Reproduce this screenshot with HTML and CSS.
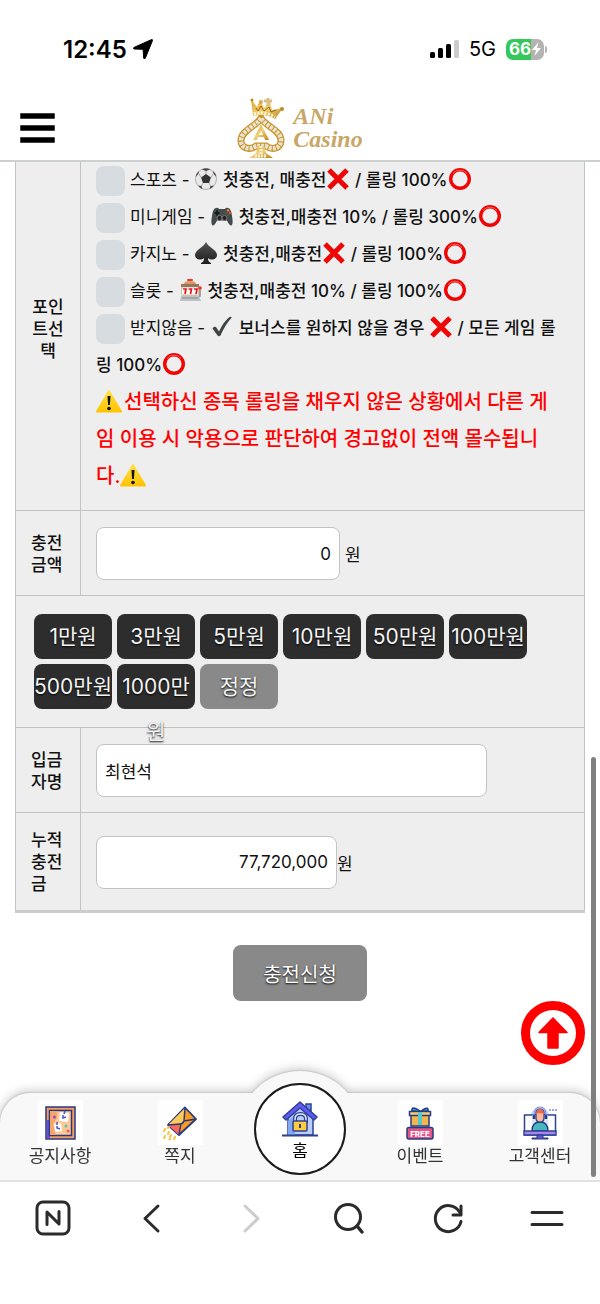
FILE: index.html
```html
<!DOCTYPE html>
<html lang="ko">

<head>
    <meta charset="utf-8" />
    <title>ANi Casino</title>
    <meta name="viewport" content="width=device-width, initial-scale=1">
    <link rel="stylesheet" href="styles.css">
</head>

<body>
    <svg class="defs" aria-hidden="true">
        <defs>
            <linearGradient id="gold" x1="0" y1="0" x2="1" y2="1">
                <stop offset="0" stop-color="#d9a62b" />
                <stop offset="0.5" stop-color="#f1d27a" />
                <stop offset="1" stop-color="#b57f16" />
            </linearGradient>
            <linearGradient id="dark" x1="0" y1="0" x2="0" y2="1">
                <stop offset="0" stop-color="#555" />
                <stop offset="1" stop-color="#1b1b1b" />
            </linearGradient>
            <linearGradient id="sign" x1="0" y1="0" x2="0" y2="1">
                <stop offset="0" stop-color="#ffe14d" />
                <stop offset="1" stop-color="#ffc400" />
            </linearGradient>
        </defs>
        <symbol id="cross" viewBox="0 0 22 22">
            <path d="M2 2l18 18M20 2L2 20" stroke="#f00505" stroke-width="5" />
        </symbol>
        <symbol id="circle" viewBox="0 0 22 22">
            <circle cx="11" cy="11" r="9.300" fill="none" stroke="#f00505" stroke-width="3.400" />
            <path d="M4 5.500a9 9 0 0 1 14 0" fill="none" stroke="#ff5a50" stroke-width="1" />
        </symbol>
        <symbol id="warning" viewBox="0 0 26 24">
            <path d="M13 2L25 22.500H1z" fill="url(#sign)" stroke="url(#sign)" stroke-width="2" stroke-linejoin="round" />
            <path d="M11.500 7h3l-.6 9h-1.800z" fill="#111" />
            <circle cx="13" cy="19.500" r="1.800" fill="#111" />
        </symbol>
    </svg>

    <div class="status">
        <div class="status-time">
            12:45
            <svg width="20" height="20" viewBox="0 0 20 20"><path d="M18.500 .6L.9 8.500q-1 .8.2 1.500l9 .3.600 9q.6 1.200 1.500.1L19.500 1.500q.2-1.200-1-.9z" stroke="#000" stroke-linejoin="round" /></svg>
        </div>
        <div class="status-icons">
            <svg width="29" height="19" viewBox="0 0 29 19">
                <rect x="0" y="12" width="5" height="6" rx="1.500" />
                <rect x="8" y="8" width="5" height="10" rx="1.500" />
                <rect x="16" y="4" width="5" height="14" rx="1.500" />
                <rect x="24" y="0" width="5" height="18" rx="1.500" fill="#ccc" />
            </svg>
            <span class="network">5G</span>
            <div class="battery">
                <span>66</span>
                <svg width="9" height="14" viewBox="0 0 9 14"><path d="M6.500 0L0 8h4L2.500 14 9 6H5z" fill="#fff" /></svg>
            </div>
        </div>
    </div>

    <header class="header">
        <button class="menu-btn" aria-label="메뉴">
            <svg width="35" height="32" viewBox="0 0 35 32"><path d="M3 4h29M3 16h29M3 28h29" stroke="#000" stroke-width="5.500" stroke-linecap="square" /></svg>
        </button>
        <a href="/" class="logo">
            <svg width="48" height="62" viewBox="0 0 48 62">
                <path d="M24 21C20 29 4 33 4 43.500c0 8 9 10 15 5.500h10c6 4.500 15 2.500 15-5.500C44 33 28 29 24 21z" fill="#fff" stroke="#c8962a" stroke-width="7" />
                <path d="M24 21C20 29 4 33 4 43.500c0 8 9 10 15 5.500h10c6 4.500 15 2.500 15-5.500C44 33 28 29 24 21z" fill="none" stroke="#e9e2d2" stroke-width="4.500" stroke-dasharray="3 1" />
                <path d="M21 49h6l2 7 7 5H12l7-5z" fill="url(#gold)" />
                <path d="M24 49v8M18 59h12" stroke="#f6f0df" stroke-width="3" stroke-dasharray="2 1" />
                <path d="M24 27l8 16h-4l-1-3h-6l-1 3h-4zM24 34l-2 4h4z" fill="url(#gold)" fill-rule="evenodd" />
                <path d="M16 19L14 2l6 8 3-7 4 8 6-7 2 9 11-2-8 11q-10-6-22-3z" fill="url(#gold)" />
                <path d="M17 17q11-3 21 3" fill="none" stroke="#fff6dc" stroke-width="3" stroke-dasharray="2 1.500" />
                <path d="M31 1v8M27 4h8" stroke="#d8c08a" stroke-width="3" />
                <path d="M19 11l2 3 3-5 3 5 5-4 2 5 5-2" fill="none" stroke="#98670e" />
                <circle cx="24" cy="5" r="2" fill="#d5ad4c" />
                <circle cx="15" cy="3" r="1.500" fill="#bd8823" />
                <circle cx="45" cy="12" r="2" fill="#bd8823" />
            </svg>
            <span class="logo-text">ANi<br>Casino</span>
        </a>
    </header>

    <main>
        <form class="form" onsubmit="return false">
            <table class="form-table">
                <tr>
                    <th class="point-label">포인트선택</th>
                    <td class="point-cell">
                        <div class="point">
                            <input type="radio" name="point" id="p1"><label for="p1">스포츠 -
                            <svg class="emoji" viewBox="0 0 22 22"><circle cx="11" cy="11" r="10.500" fill="#e9e9e9" stroke="#999" stroke-width=".7" /><path d="M11 6l5 3.500-2 5.500H8L6 9.500z" fill="#333" /><path d="M7 1.500l4 1.500 4-1.500-2-1H9zM.700 9l3-3.500L4 3 1.500 6zM21.300 9l-3-3.500L18 3l2.500 3zM3 17.500l3.500.5 1 3-2-1zM19 17.500l-3.500.5-1 3 2-1z" fill="#444" /><path d="M11 3v3M3.700 5.500L6 9.500M18.300 5.500L16 9.500M8 15l-1.500 3M14 15l1.500 3" stroke="#aaa" /></svg>
                            <b>첫충전, 매충전<svg class="emoji"><use href="#cross" /></svg> / 롤링 100%<svg class="emoji"><use href="#circle" /></svg></b></label>
                        </div>
                        <div class="point">
                            <input type="radio" name="point" id="p2"><label for="p2">미니게임 -
                            <svg class="emoji" viewBox="0 0 22 22"><path d="M5 3q2-1 3 1h6q1-2 3-1 3 0 4 8 1.500 8-.5 9.500-2 .5-4.500-5H6q-2.500 5.500-4.500 5Q-.500 19 1 11 2 3 5 3z" fill="#444b4b" /><path d="M3.500 8h5M6 5.500v5" stroke="#191919" stroke-width="2" /><circle cx="8.500" cy="13" r="2.500" fill="#222" stroke="#777" /><circle cx="13.500" cy="13" r="2.500" fill="#222" stroke="#777" /><circle cx="17" cy="5.500" r="1.300" fill="#f58220" /><circle cx="19" cy="8" r="1.300" fill="#e2502c" /><circle cx="15" cy="8" r="1.300" fill="#555" /><circle cx="17" cy="10" r="1.300" fill="#555" /></svg>
                            <b>첫충전,매충전 10% / 롤링 300%<svg class="emoji"><use href="#circle" /></svg></b></label>
                        </div>
                        <div class="point">
                            <input type="radio" name="point" id="p3"><label for="p3">카지노 -
                            <svg class="emoji" viewBox="0 0 22 22"><path d="M11 0c2 5 11 8 11 13 0 4.500-6 6-9 3 0 3 1 4 3 5v1H6v-1c2-1 3-2 3-5-3 3-9 1.500-9-3C0 8 9 5 11 0z" fill="url(#dark)" /></svg>
                            <b>첫충전,매충전<svg class="emoji"><use href="#cross" /></svg> / 롤링 100%<svg class="emoji"><use href="#circle" /></svg></b></label>
                        </div>
                        <div class="point">
                            <input type="radio" name="point" id="p4"><label for="p4">슬롯 -
                            <svg class="emoji" viewBox="0 0 22 22"><path d="M4 5q0-3 6-3t6 3z" fill="#d99a63" /><rect x="7" y="0" width="6" height="2" rx="1" fill="#e33" /><rect x="1" y="5" width="18" height="12" rx="2" fill="#cfc2a6" /><path d="M1 5h18v3H1z" fill="#94785c" /><rect x="2" y="8.500" width="16" height="7" fill="#fff" /><path d="M3 10h3l-1 5M8.500 10h3l-1 5M14 10h3l-1 5" fill="none" stroke="#e8141c" stroke-width="1.700" /><path d="M1 17h18l2 5H0z" fill="#bfc2c4" /><path d="M2 19h16" stroke="#888" /><path d="M20 10v7h-1" fill="none" stroke="#888" stroke-width="1.500" /><circle cx="20" cy="9" r="1.800" fill="#e33" /></svg>
                            <b>첫충전,매충전 10% / 롤링 100%<svg class="emoji"><use href="#circle" /></svg></b></label>
                        </div>
                        <div class="point">
                            <input type="radio" name="point" id="p5"><label for="p5">받지않음 -
                            <svg class="emoji" viewBox="0 0 22 22"><path d="M1.500 12.500q1-2.500 3.500-1.500l3 4.500Q13 5 18.500 1q2.500-.5 2 .7Q14 9 9.500 19.500q-2 1.500-3 0z" fill="#404444" /></svg>
                            <b>보너스를 원하지 않을 경우 <svg class="emoji"><use href="#cross" /></svg> / 모든 게임 롤링 100%<svg class="emoji"><use href="#circle" /></svg></b></label>
                        </div>
                        <div class="warning"><svg class="emoji-big"><use href="#warning" /></svg>선택하신 종목 롤링을 채우지 않은 상황에서 다른 게임 이용 시 악용으로 판단하여 경고없이 전액 몰수됩니다.<svg class="emoji-big"><use href="#warning" /></svg></div>
                    </td>
                </tr>
                <tr>
                    <th><label for="money">충전금액</label></th>
                    <td><div class="field"><input class="input money" id="money" value="0"><span>원</span></div></td>
                </tr>
                <tr>
                    <td colspan="2" class="amount-cell">
                        <div class="amounts">
                            <button type="button" class="amount">1만원</button>
                            <button type="button" class="amount">3만원</button>
                            <button type="button" class="amount">5만원</button>
                            <button type="button" class="amount">10만원</button>
                            <button type="button" class="amount">50만원</button>
                            <button type="button" class="amount">100만원</button>
                            <button type="button" class="amount">500만원</button>
                            <button type="button" class="amount">1000만원</button>
                            <button type="button" class="amount reset">정정</button>
                        </div>
                    </td>
                </tr>
                <tr>
                    <th><label for="name">입금자명</label></th>
                    <td><div class="field"><input class="input name" id="name" value="최현석"></div></td>
                </tr>
                <tr>
                    <th><label for="total">누적충전금</label></th>
                    <td><div class="field tight"><input class="input money total" id="total" value="77,720,000" readonly><span>원</span></div></td>
                </tr>
            </table>
            <button class="submit">충전신청</button>
        </form>
        <a href="#" class="to-top" aria-label="맨 위로">
            <svg width="30" height="32" viewBox="0 0 30 32"><path d="M15 1L29 15.500H20V31H10V15.500H1z" fill="red" stroke="red" stroke-width="1.500" stroke-linejoin="round" /></svg>
        </a>
    </main>

    <nav class="tabs">
        <a href="/notice" class="tab">
            <span class="tab-icon">
                <svg width="31" height="34" viewBox="0 0 31 34"><rect x="1" y="1" width="29" height="32" fill="#f79a63" stroke="#243a83" stroke-width="1.500" /><path d="M2 14h3v18H2z" fill="#654ff0" /><rect x="4.500" y="4.500" width="22" height="25" fill="#ffc894" stroke="#243a83" stroke-width="1.500" /><path d="M5 5h7v7l-4 6 3 11H5z" fill="#f8a568" /><path d="M15 6l9 1-1 9-9-1zM9 18l7-1 1 8-7 1z" fill="#fff" /><path d="M18 9v3l3-1M12 20v2l3 1M20 5l-1 3M12 16v3" stroke="#4657cf" stroke-width="1.500" fill="none" /><circle cx="9.500" cy="11" r="1.500" fill="#8a4ce8" /><circle cx="21" cy="20" r="1.500" fill="#4fc9c4" /><circle cx="23" cy="25" r="1.500" fill="#f35b4c" /></svg>
            </span>
            공지사항
        </a>
        <a href="/message" class="tab">
            <span class="tab-icon">
                <svg width="34" height="34" viewBox="0 0 34 34"><path d="M22 1.500L33 13 16 29 5 19z" fill="#fb9a1d" stroke="#243a83" stroke-width="1.800" stroke-linejoin="round" /><path d="M5 19l11-2v12z" fill="#ff6659" /><path d="M22 2v14l-4 3-12-1z" fill="#ffcc58" /><path d="M22 2l-1 13q-1 3-4 3L5 19M18 17l-2 12M21 15l12-2" fill="none" stroke="#243a83" stroke-width="1.500" /><path d="M2 23l-1 2M6 26l-1 2M2 30l-1 2M8 29l-1 2M12 31l-1 2M5 22l1-1M7 33l-1 1" stroke="#ffc13d" stroke-width="2" stroke-linecap="round" /></svg>
            </span>
            쪽지
        </a>
        <a href="/" class="tab home">
            <span class="home-circle">
                <svg width="36" height="36" viewBox="0 0 36 36"><path d="M6 16L19 5l12 12v17H6z" fill="#bacdfb" stroke="#2b4191" stroke-width="1.500" /><path d="M6 20v14h7V14z" fill="#82a7f3" /><path d="M24 3h5v8l-5-4z" fill="#6f8cf1" stroke="#2b4191" stroke-width="1.500" /><path d="M1 16L18 1l17 15-3 3L18 7 4 19z" fill="#6458f5" stroke="#2b4191" stroke-width="1.500" stroke-linejoin="round" /><path d="M13 22v-4q0-5 5.500-5t5.500 5v4" fill="none" stroke="#2b4191" stroke-width="4" /><path d="M13 22v-4q0-5 5.500-5t5.500 5v4" fill="none" stroke="#e1eaff" stroke-width="1.500" /><rect x="11" y="20" width="14" height="10" rx="1" fill="#ffcb3e" stroke="#2b4191" stroke-width="1.500" /><path d="M18 23v4M0 34.500h36" stroke="#2b4191" stroke-width="2" /></svg>
                홈
            </span>
        </a>
        <a href="/event" class="tab">
            <span class="tab-icon">
                <svg width="28" height="34" viewBox="0 0 28 34"><path d="M14 5Q5-1 6 5l8 1Q23-1 22 5l-8 1z" fill="#31a5bc" stroke="#243a83" stroke-width="1.500" /><rect x="5" y="8" width="18" height="12" fill="#f5b64b" stroke="#243a83" stroke-width="1.500" /><rect x="3.500" y="5.500" width="21" height="4" fill="#ffd06a" stroke="#243a83" stroke-width="1.500" /><path d="M12 6h4v13h-4z" fill="#5ac8cf" /><rect x="1" y="21.500" width="26" height="11.500" rx="2" fill="#e55486" stroke="#243a83" stroke-width="1.500" /><text x="14" y="30.500" text-anchor="middle" class="free">FREE</text></svg>
            </span>
            이벤트
        </a>
        <a href="/support" class="tab">
            <span class="tab-icon">
                <svg width="34" height="34" viewBox="0 0 34 34"><circle cx="17" cy="11" r="9.500" fill="#c2d4ff" /><path d="M1.500 9h31v20h-31z" fill="#fff" stroke="#2f438f" stroke-width="1.500" /><path d="M9 9h16v16H9z" fill="#dbe5ff" /><path d="M9 25q0-9 8-9t8 9z" fill="#48b7bc" stroke="#243a83" stroke-width="1.300" /><path d="M13 7q0-4 4-4t4 4v5q0 4-4 4t-4-4z" fill="#ffb898" stroke="#243a83" stroke-width="1.200" /><path d="M13 8q0-5 4-5t4 5q-5-2-8 0z" fill="#ed684d" /><path d="M11 12V9q0-8 6-8t6 8v3" fill="none" stroke="#7d93e8" stroke-width="1.200" /><path d="M11 9v4M23 9v4" stroke="#243a83" stroke-width="2.500" /><path d="M1 25h32v4H1z" fill="#a985f1" stroke="#2f438f" stroke-width="1.300" /><path d="M14 29h6v3h5v1H9v-1h5z" fill="#6754dc" stroke="#243a83" /><path d="M26 4h2M29 4h2M32 4h2" stroke="#7d8bd7" stroke-width="1.500" /></svg>
            </span>
            고객센터
        </a>
    </nav>

    <footer class="browser">
        <button aria-label="홈페이지"><svg width="36" height="36" viewBox="0 0 36 36"><rect x="2" y="2" width="32" height="32" rx="6" /><path d="M12 24.500V12l12 12V11.500" /></svg></button>
        <button aria-label="뒤로"><svg width="36" height="36" viewBox="0 0 36 36"><path d="M24 6L11 18.500 24 31" /></svg></button>
        <button aria-label="앞으로" class="off"><svg width="36" height="36" viewBox="0 0 36 36"><path d="M12 6l13 12.500L12 31" /></svg></button>
        <button aria-label="검색"><svg width="36" height="36" viewBox="0 0 36 36"><circle cx="17" cy="17" r="12.500" /><path d="M26 26l5 6" stroke-width="3.500" /></svg></button>
        <button aria-label="새로고침"><svg width="36" height="36" viewBox="0 0 36 36"><path d="M31 21.500A13 13 0 1 1 29.500 12M31 6v9h-8" /></svg></button>
        <button aria-label="더보기"><svg width="36" height="36" viewBox="0 0 36 36"><path d="M3 12.500h30M3 24.500h30" /></svg></button>
    </footer>
    <div class="scrollbar"></div>
</body>

</html>
```
FILE: styles.css
```css
* {
    box-sizing: border-box;
}

body {
    margin: 0;
    padding: 0;
    background-color: #fff;
    color: #111;
    font-family: Inter, "Noto Sans CJK KR", sans-serif;
    font-size: 17px;
}

button,
input {
    font-family: inherit;
    color: inherit;
}

button {
    padding: 0;
    border: 0;
    background: none;
    cursor: pointer;
}

a {
    color: inherit;
    text-decoration: none;
}

.defs {
    position: absolute;
    width: 0;
    height: 0;
}

.status {
    display: flex;
    justify-content: space-between;
    align-items: center;
    height: 95px;
    padding: 3px 56px 0 63px;
    color: #000;
}

.status-time {
    display: flex;
    align-items: center;
    gap: 6px;
    font-size: 24px;
    font-weight: 600;
}

.status-icons {
    display: flex;
    align-items: center;
    gap: 10px;
}

.network {
    font-size: 20px;
}

.battery {
    position: relative;
    display: flex;
    align-items: center;
    gap: 1px;
    width: 38px;
    height: 21px;
    padding-left: 3px;
    border-radius: 7px;
    background: linear-gradient(to right, #34c759 66%, #b3b3b3 66%);
    color: #fff;
    font-size: 17px;
    font-weight: 700;
}

.battery::after {
    content: "";
    position: absolute;
    top: 7px;
    right: -3px;
    width: 2px;
    height: 7px;
    border-radius: 0 2px 2px 0;
    background-color: #b3b3b3;
}

.header {
    display: grid;
    grid-template-columns: 1fr auto 1fr;
    align-items: center;
    height: 67px;
    padding: 0 20px;
    border-bottom: 2px solid #ccd0cf;
}

.menu-btn {
    display: flex;
    justify-self: start;
}

.logo {
    display: flex;
    align-items: center;
    gap: 8px;
}

.logo-text {
    color: #c8a767;
    font-family: "Liberation Serif", serif;
    font-size: 24px;
    font-style: italic;
    font-weight: bold;
    line-height: 23px;
}

.form {
    padding: 0 15px;
}

.form-table {
    width: 100%;
    border-collapse: collapse;
    background-color: #eee;
    border-bottom: 3px solid #ccc;
}

.form-table th,
.form-table td {
    padding: 16px 15px 15px;
    border: 1px solid #c2c4c4;
    text-align: left;
}

.form-table tr:last-child th,
.form-table tr:last-child td {
    border-bottom: 3px solid #ccc;
}

.form-table th {
    width: 65px;
    font-weight: 500;
    line-height: 22px;
    word-break: break-all;
}

.form-table .point-label,
.form-table .point-cell {
    padding-top: 0;
    border-top: 0;
}

.form-table .point-label {
    text-align: center;
}

.point,
.warning {
    line-height: 37px;
}

.point input {
    appearance: none;
    width: 29px;
    height: 30px;
    margin: 0 5px 0 0;
    border-radius: 8px;
    background-color: #d6dcdf;
    vertical-align: middle;
}

.point input:checked {
    background-color: #898989;
}

.point b {
    font-weight: 500;
}

.emoji {
    width: 22px;
    height: 22px;
    margin: 0 1px;
    vertical-align: -4px;
}

.emoji-big {
    width: 26px;
    height: 24px;
    margin-right: 2px;
    vertical-align: -4px;
}

.warning {
    padding-right: 10px;
    color: red;
    font-size: 20px;
    font-weight: 500;
}

.field {
    display: flex;
    align-items: center;
    gap: 5px;
}

.field.tight {
    gap: 0;
}

.input {
    height: 53px;
    padding: 0 8px;
    border: 1px solid #c2c4c4;
    border-radius: 8px;
    background-color: #fff;
    font-size: 17px;
}

.money {
    width: 244px;
    text-align: right;
}

.total {
    width: 241px;
}

.name {
    width: 391px;
    max-width: 100%;
}

.form-table .amount-cell {
    padding: 18px;
}

.amounts {
    display: flex;
    flex-wrap: wrap;
    gap: 5px;
}

.amount {
    width: 78px;
    height: 45px;
    border-radius: 8px;
    background-color: #2d2d2d;
    color: #f4f4f4;
    font-size: 21px;
    line-height: 45px;
    text-shadow: 0 1px 2px #000;
}

.reset,
.submit {
    background-color: #898989;
}

.submit {
    display: block;
    width: 134px;
    height: 56px;
    margin: 32px auto 0;
    border-radius: 8px;
    color: #fff;
    font-size: 20px;
    text-shadow: 0 1px 2px #000;
}

.to-top {
    display: flex;
    align-items: center;
    justify-content: center;
    width: 64px;
    height: 64px;
    margin: 0 15px 28px auto;
    border: 9px solid red;
    border-radius: 50%;
}

.tabs {
    position: relative;
    display: grid;
    grid-template-columns: repeat(5, 1fr);
    height: 87px;
    border-radius: 30px 30px 0 0;
    background-color: #f8f8f8;
    filter: drop-shadow(0 0 1px #aaa) drop-shadow(0 -2px 5px #ccc);
}

/* round bump behind the home tab */
.tabs::before {
    content: "";
    position: absolute;
    top: -22px;
    left: calc(50% - 63px);
    width: 126px;
    height: 109px;
    border-radius: 63px 63px 0 0;
    background-color: #f8f8f8;
}

.tab {
    position: relative;
    display: flex;
    flex-direction: column;
    align-items: center;
    padding-top: 7px;
    color: #333;
    line-height: 22px;
}

.tab-icon {
    display: flex;
    align-items: center;
    justify-content: center;
    width: 45px;
    height: 45px;
    background-color: #fff;
}

.home {
    padding-top: 0;
    margin-top: -10px;
    color: #000;
}

.home-circle {
    display: flex;
    flex-direction: column;
    align-items: center;
    gap: 3px;
    width: 92px;
    height: 92px;
    padding-top: 16px;
    border: 2px solid #1b1b1b;
    border-radius: 50%;
    background-color: #fff;
}

.free {
    fill: #fff;
    font-size: 8px;
    font-weight: 800;
}

.browser {
    position: relative;
    display: grid;
    grid-template-columns: repeat(6, 1fr);
    align-items: start;
    height: 124px;
    padding: 18px 4px 0;
    border-top: 2px solid #e2e2e2;
    background-color: #fff;
}

.browser svg {
    fill: none;
    stroke: #2b2b2b;
    stroke-width: 3px;
    stroke-linecap: round;
    stroke-linejoin: round;
}

.browser .off svg {
    stroke: #ccc;
}

.scrollbar {
    position: fixed;
    right: 4px;
    bottom: 127px;
    width: 5px;
    height: 420px;
    border-radius: 3px;
    background-color: #808080;
}
```
